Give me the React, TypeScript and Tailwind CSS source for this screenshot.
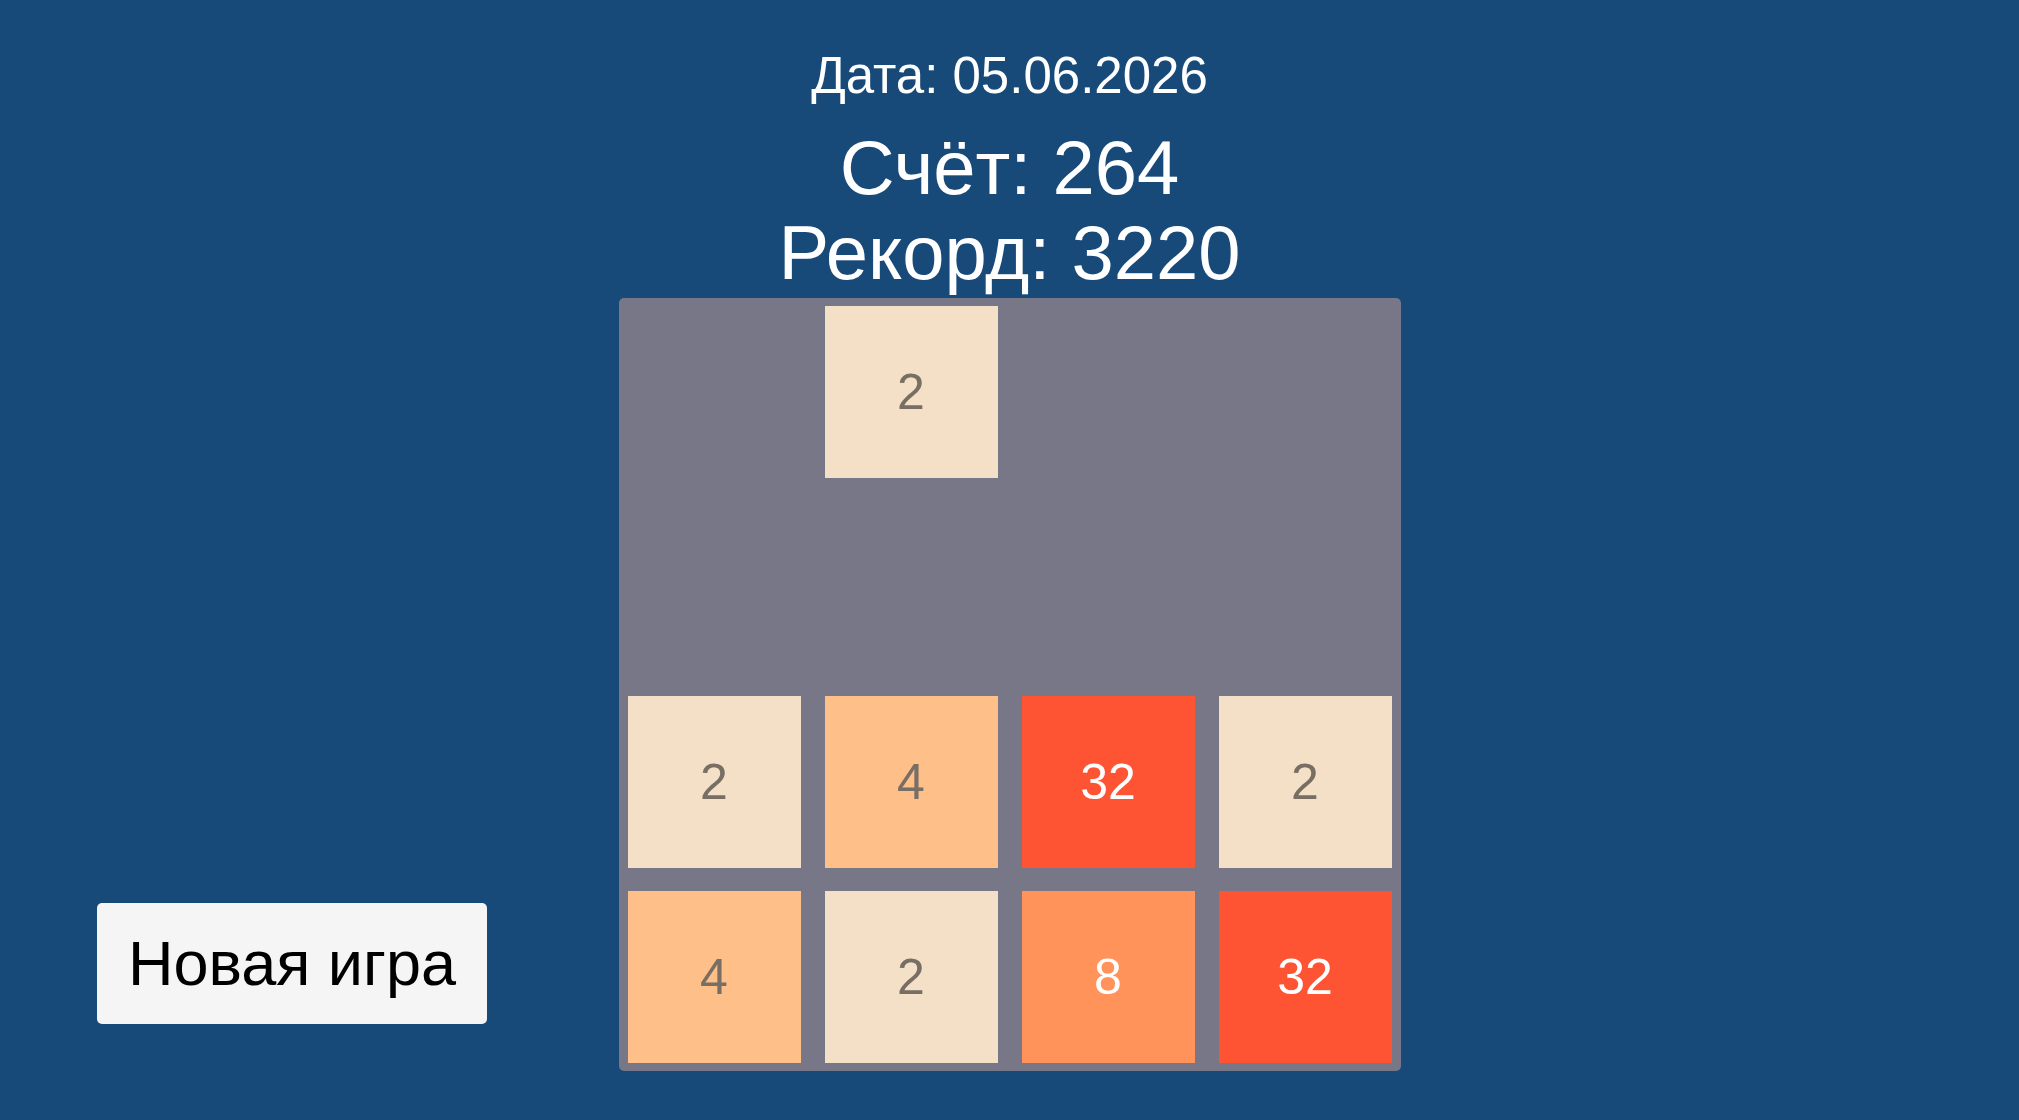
import React from "react";

type Cell = number | null;

const board: Cell[][] = [
  [null, 2, null, null],
  [null, null, null, null],
  [2, 4, 32, 2],
  [4, 2, 8, 32],
];

function tileClass(value: number) {
  switch (value) {
    case 2:
      return "bg-[#f3e0c7] text-[#786e64]";
    case 4:
      return "bg-[#ffbf89] text-[#786e64]";
    case 8:
      return "bg-[#ff935a] text-white";
    default:
      return "bg-[#ff5433] text-white";
  }
}

function Tile({ value }: { value: Cell }) {
  if (value === null) return <div className="h-[172px] w-[173px]" />;
  return (
    <div
      className={`flex h-[172px] w-[173px] items-center justify-center text-[50px] leading-none ${tileClass(value)}`}
    >
      {value}
    </div>
  );
}

export default function App() {
  return (
    <div
      className="flex h-[1120px] w-full flex-col items-center overflow-hidden bg-[#184a79] pt-[47px] text-white"
      style={{ fontFamily: '"Liberation Sans", Arial, sans-serif' }}
    >
      <div className="text-[51px] leading-[57px]">Дата: 05.06.2026</div>
      <div className="mt-[21px] text-[76px] leading-[85px]">Счёт: 264</div>
      <div className="text-[76px] leading-[85px]">Рекорд: 3220</div>

      <div className="mt-[3px] grid w-full grid-cols-[1fr_auto_1fr]">
        <div className="flex items-end pb-[47px] pl-[97px]">
          <button className="flex h-[121px] w-[390px] items-center justify-center rounded-[5px] bg-[#f5f5f5] text-[63px] leading-none text-black">
            Новая игра
          </button>
        </div>

        <div className="grid grid-cols-4 gap-x-[24px] gap-y-[23px] rounded-[5px] bg-[#777787] px-[9px] pt-[8px] pb-[8px]">
          {board.flat().map((v, i) => (
            <Tile key={i} value={v} />
          ))}
        </div>

        <div />
      </div>
    </div>
  );
}
